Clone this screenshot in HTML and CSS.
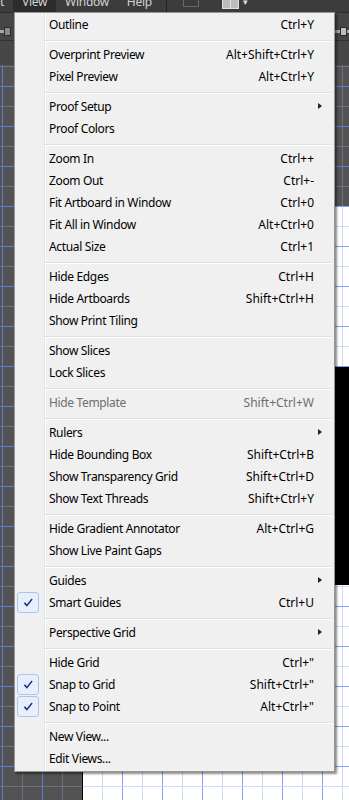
FILE: index.html
```html
<!DOCTYPE html>
<html lang="en">
<head>
    <meta charset="UTF-8">
    <meta name="viewport" content="width=device-width, initial-scale=1.0">
    <title>View menu</title>
    <link rel="stylesheet" href="styles.css">
</head>
<body>
    <div class="app">
        <!-- Application menu bar (top cut off) -->
        <div class="menubar">
            <span class="mb-item mb-first">t</span>
            <span class="mb-item mb-open">View</span>
            <span class="mb-item">Window</span>
            <span class="mb-item">Help</span>
            <span class="mb-sep"></span>
            <span class="mb-icon-box"></span>
            <span class="mb-layout">
                <span class="mb-layout-a"></span><span class="mb-layout-b"></span>
            </span>
            <span class="mb-caret">&#9662;</span>
        </div>

        <!-- Control bar -->
        <div class="toolbar">
            <span class="slider slider-left"><span class="thumb"></span></span>
            <span class="slider slider-right"><span class="thumb"></span></span>
        </div>
        <div class="tabbar"></div>

        <!-- Canvas -->
        <div class="workspace">
            <div class="artboard">
                <div class="black-shape"></div>
            </div>
        </div>

        <!-- Open View menu -->
        <div class="menu">
            <div class="menu-item"><span class="label">Outline</span><span class="key">Ctrl+Y</span></div>
            <div class="menu-sep"></div>
            <div class="menu-item"><span class="label">Overprint Preview</span><span class="key">Alt+Shift+Ctrl+Y</span></div>
            <div class="menu-item"><span class="label">Pixel Preview</span><span class="key">Alt+Ctrl+Y</span></div>
            <div class="menu-sep"></div>
            <div class="menu-item"><span class="label">Proof Setup</span><span class="arrow"></span></div>
            <div class="menu-item"><span class="label">Proof Colors</span></div>
            <div class="menu-sep"></div>
            <div class="menu-item"><span class="label">Zoom In</span><span class="key">Ctrl++</span></div>
            <div class="menu-item"><span class="label">Zoom Out</span><span class="key">Ctrl+-</span></div>
            <div class="menu-item"><span class="label">Fit Artboard in Window</span><span class="key">Ctrl+0</span></div>
            <div class="menu-item"><span class="label">Fit All in Window</span><span class="key">Alt+Ctrl+0</span></div>
            <div class="menu-item"><span class="label">Actual Size</span><span class="key">Ctrl+1</span></div>
            <div class="menu-sep"></div>
            <div class="menu-item"><span class="label">Hide Edges</span><span class="key">Ctrl+H</span></div>
            <div class="menu-item"><span class="label">Hide Artboards</span><span class="key">Shift+Ctrl+H</span></div>
            <div class="menu-item"><span class="label">Show Print Tiling</span></div>
            <div class="menu-sep"></div>
            <div class="menu-item"><span class="label">Show Slices</span></div>
            <div class="menu-item"><span class="label">Lock Slices</span></div>
            <div class="menu-sep"></div>
            <div class="menu-item disabled"><span class="label">Hide Template</span><span class="key">Shift+Ctrl+W</span></div>
            <div class="menu-sep"></div>
            <div class="menu-item"><span class="label">Rulers</span><span class="arrow"></span></div>
            <div class="menu-item"><span class="label">Hide Bounding Box</span><span class="key">Shift+Ctrl+B</span></div>
            <div class="menu-item"><span class="label">Show Transparency Grid</span><span class="key">Shift+Ctrl+D</span></div>
            <div class="menu-item"><span class="label">Show Text Threads</span><span class="key">Shift+Ctrl+Y</span></div>
            <div class="menu-sep"></div>
            <div class="menu-item"><span class="label">Hide Gradient Annotator</span><span class="key">Alt+Ctrl+G</span></div>
            <div class="menu-item"><span class="label">Show Live Paint Gaps</span></div>
            <div class="menu-sep"></div>
            <div class="menu-item"><span class="label">Guides</span><span class="arrow"></span></div>
            <div class="menu-item checked">
                <span class="check"><svg width="10" height="10" viewBox="0 0 10 10"><path d="M0.8 5.2 L2.2 4.2 L3.8 6.4 L8.6 0.6 L9.6 1.6 L3.9 8.8 Z" fill="#1b2a86"/></svg></span>
                <span class="label">Smart Guides</span><span class="key">Ctrl+U</span>
            </div>
            <div class="menu-sep"></div>
            <div class="menu-item"><span class="label">Perspective Grid</span><span class="arrow"></span></div>
            <div class="menu-sep"></div>
            <div class="menu-item"><span class="label">Hide Grid</span><span class="key">Ctrl+"</span></div>
            <div class="menu-item checked">
                <span class="check"><svg width="10" height="10" viewBox="0 0 10 10"><path d="M0.8 5.2 L2.2 4.2 L3.8 6.4 L8.6 0.6 L9.6 1.6 L3.9 8.8 Z" fill="#1b2a86"/></svg></span>
                <span class="label">Snap to Grid</span><span class="key">Shift+Ctrl+"</span>
            </div>
            <div class="menu-item checked">
                <span class="check"><svg width="10" height="10" viewBox="0 0 10 10"><path d="M0.8 5.2 L2.2 4.2 L3.8 6.4 L8.6 0.6 L9.6 1.6 L3.9 8.8 Z" fill="#1b2a86"/></svg></span>
                <span class="label">Snap to Point</span><span class="key">Alt+Ctrl+"</span>
            </div>
            <div class="menu-sep"></div>
            <div class="menu-item"><span class="label">New View...</span></div>
            <div class="menu-item"><span class="label">Edit Views...</span></div>
        </div>
    </div>
</body>
</html>
```

FILE: styles.css
```css
/* Page */
body, html {
    margin: 0;
    height: 100%;
    font-family: "Noto Sans", "Open Sans", sans-serif;
    font-size: 12px;
}

.app {
    position: relative;
    width: 349px;
    height: 800px;
    overflow: hidden;
    display: flex;
    flex-direction: column;
    background-color: #535353;
}

/* Menu bar */
.menubar {
    height: 12px;
    flex: none;
    display: flex;
    align-items: flex-start;
    background-color: #3c3c3c;
    color: #d2d2d2;
    overflow: hidden;
}

.mb-item {
    height: 12px;
    padding: 0 9px;
    line-height: 4px;
    letter-spacing: -0.3px;
}

.mb-first {
    padding: 0 9px 0 0;
}

.mb-open {
    background-color: #2c2c2c;
}

.mb-sep {
    width: 1px;
    height: 12px;
    margin-left: 5px;
    background-color: #222;
}

.mb-icon-box {
    width: 14px;
    height: 6px;
    margin-left: 16px;
    border: 1px solid #6a6a6a;
    border-top: none;
}

.mb-layout {
    display: flex;
    margin-left: 23px;
    height: 8px;
    width: 15px;
    border: 1px solid #e0e0e0;
    border-top: none;
    background-color: #e0e0e0;
    gap: 1px;
}

.mb-layout-a, .mb-layout-b {
    flex: 1;
    background-color: #bdbdbd;
}

.mb-caret {
    margin-left: 4px;
    color: #e0e0e0;
    font-size: 9px;
    line-height: 4px;
}

/* Control bars */
.toolbar {
    height: 28px;
    flex: none;
    display: flex;
    align-items: center;
    justify-content: space-between;
    background-color: #464646;
    border-top: 1px solid #2e2e2e;
    box-sizing: border-box;
    padding-top: 10px;
}

.slider {
    position: relative;
    display: block;
    height: 3px;
    background-color: #a8a8a8;
}

.slider-left {
    width: 8px;
}

.slider-right {
    width: 14px;
}

.thumb {
    position: absolute;
    top: -3px;
    width: 5px;
    height: 7px;
    background-color: #8a8a8a;
    border: 1px solid #2a2a2a;
}

.slider-left .thumb {
    left: 4px;
}

.slider-right .thumb {
    left: 5px;
    background-color: #c0c0c0;
}

.tabbar {
    height: 25px;
    flex: none;
    background-color: #474747;
    border-top: 1px solid #333;
    box-sizing: border-box;
}

/* Canvas with grid */
.workspace {
    position: relative;
    flex: 1;
    background-color: #535353;
    background-image:
        linear-gradient(to bottom, #5b7ede 0, #5b7ede 1px, transparent 1px),
        linear-gradient(to bottom, transparent 20px, #6b7288 20px, #6b7288 21px, transparent 21px),
        linear-gradient(to right, #5b7ede 0, #5b7ede 1px, transparent 1px),
        linear-gradient(to right, transparent 20px, #6b7288 20px, #6b7288 21px, transparent 21px);
    background-size: 40px 40px;
    background-position: 2px 21px;
}

.artboard {
    position: absolute;
    left: 82px;
    top: 141px;
    right: 0;
    bottom: 0;
    border-left: 1px solid #000;
    background-color: #fff;
    background-image:
        linear-gradient(to bottom, #86a3ee 0, #86a3ee 1px, transparent 1px),
        linear-gradient(to bottom, transparent 20px, #cfdaf6 20px, #cfdaf6 21px, transparent 21px),
        linear-gradient(to right, #86a3ee 0, #86a3ee 1px, transparent 1px),
        linear-gradient(to right, transparent 20px, #cfdaf6 20px, #cfdaf6 21px, transparent 21px);
    background-size: 40px 40px;
    background-position: -1px 0;
}

.black-shape {
    position: absolute;
    top: 161px;
    left: 100px;
    right: 0;
    height: 218px;
    background-color: #000;
}

/* Drop-down menu */
.menu {
    position: absolute;
    left: 14px;
    top: 12px;
    width: 319px;
    padding: 0 0 2px;
    background-color: #f0f0f0;
    border: 1px solid #979797;
    box-shadow: 2px 2px 2px rgba(0, 0, 0, 0.45);
    color: #000;
    background-image: linear-gradient(to right, transparent 29px, #e2e3e3 29px, #e2e3e3 30px, #fff 30px, #fff 31px, transparent 31px);
}

.menu-item {
    position: relative;
    display: flex;
    align-items: center;
    height: 22px;
    padding: 0 20px 0 34px;
}

.label {
    flex: 1;
    white-space: nowrap;
    letter-spacing: -0.35px;
}

.key {
    white-space: nowrap;
}

.disabled {
    color: #6d6d6d;
}

.arrow {
    position: absolute;
    right: 12px;
    top: 8px;
    width: 0;
    height: 0;
    border-top: 3.5px solid transparent;
    border-bottom: 3.5px solid transparent;
    border-left: 4px solid #222;
}

.menu-sep {
    height: 8px;
    box-sizing: border-box;
    margin-left: 30px;
    margin-right: 1px;
    padding-top: 5px;
}

.menu-sep::before {
    content: "";
    display: block;
    height: 1px;
    background-color: #e0e0e0;
    border-bottom: 1px solid #fff;
}

.check {
    position: absolute;
    left: 2px;
    top: 1px;
    width: 20px;
    height: 19px;
    display: flex;
    align-items: center;
    justify-content: center;
    background-color: #e6effb;
    border: 1px solid #a9c5ee;
    border-radius: 3px;
}
```
